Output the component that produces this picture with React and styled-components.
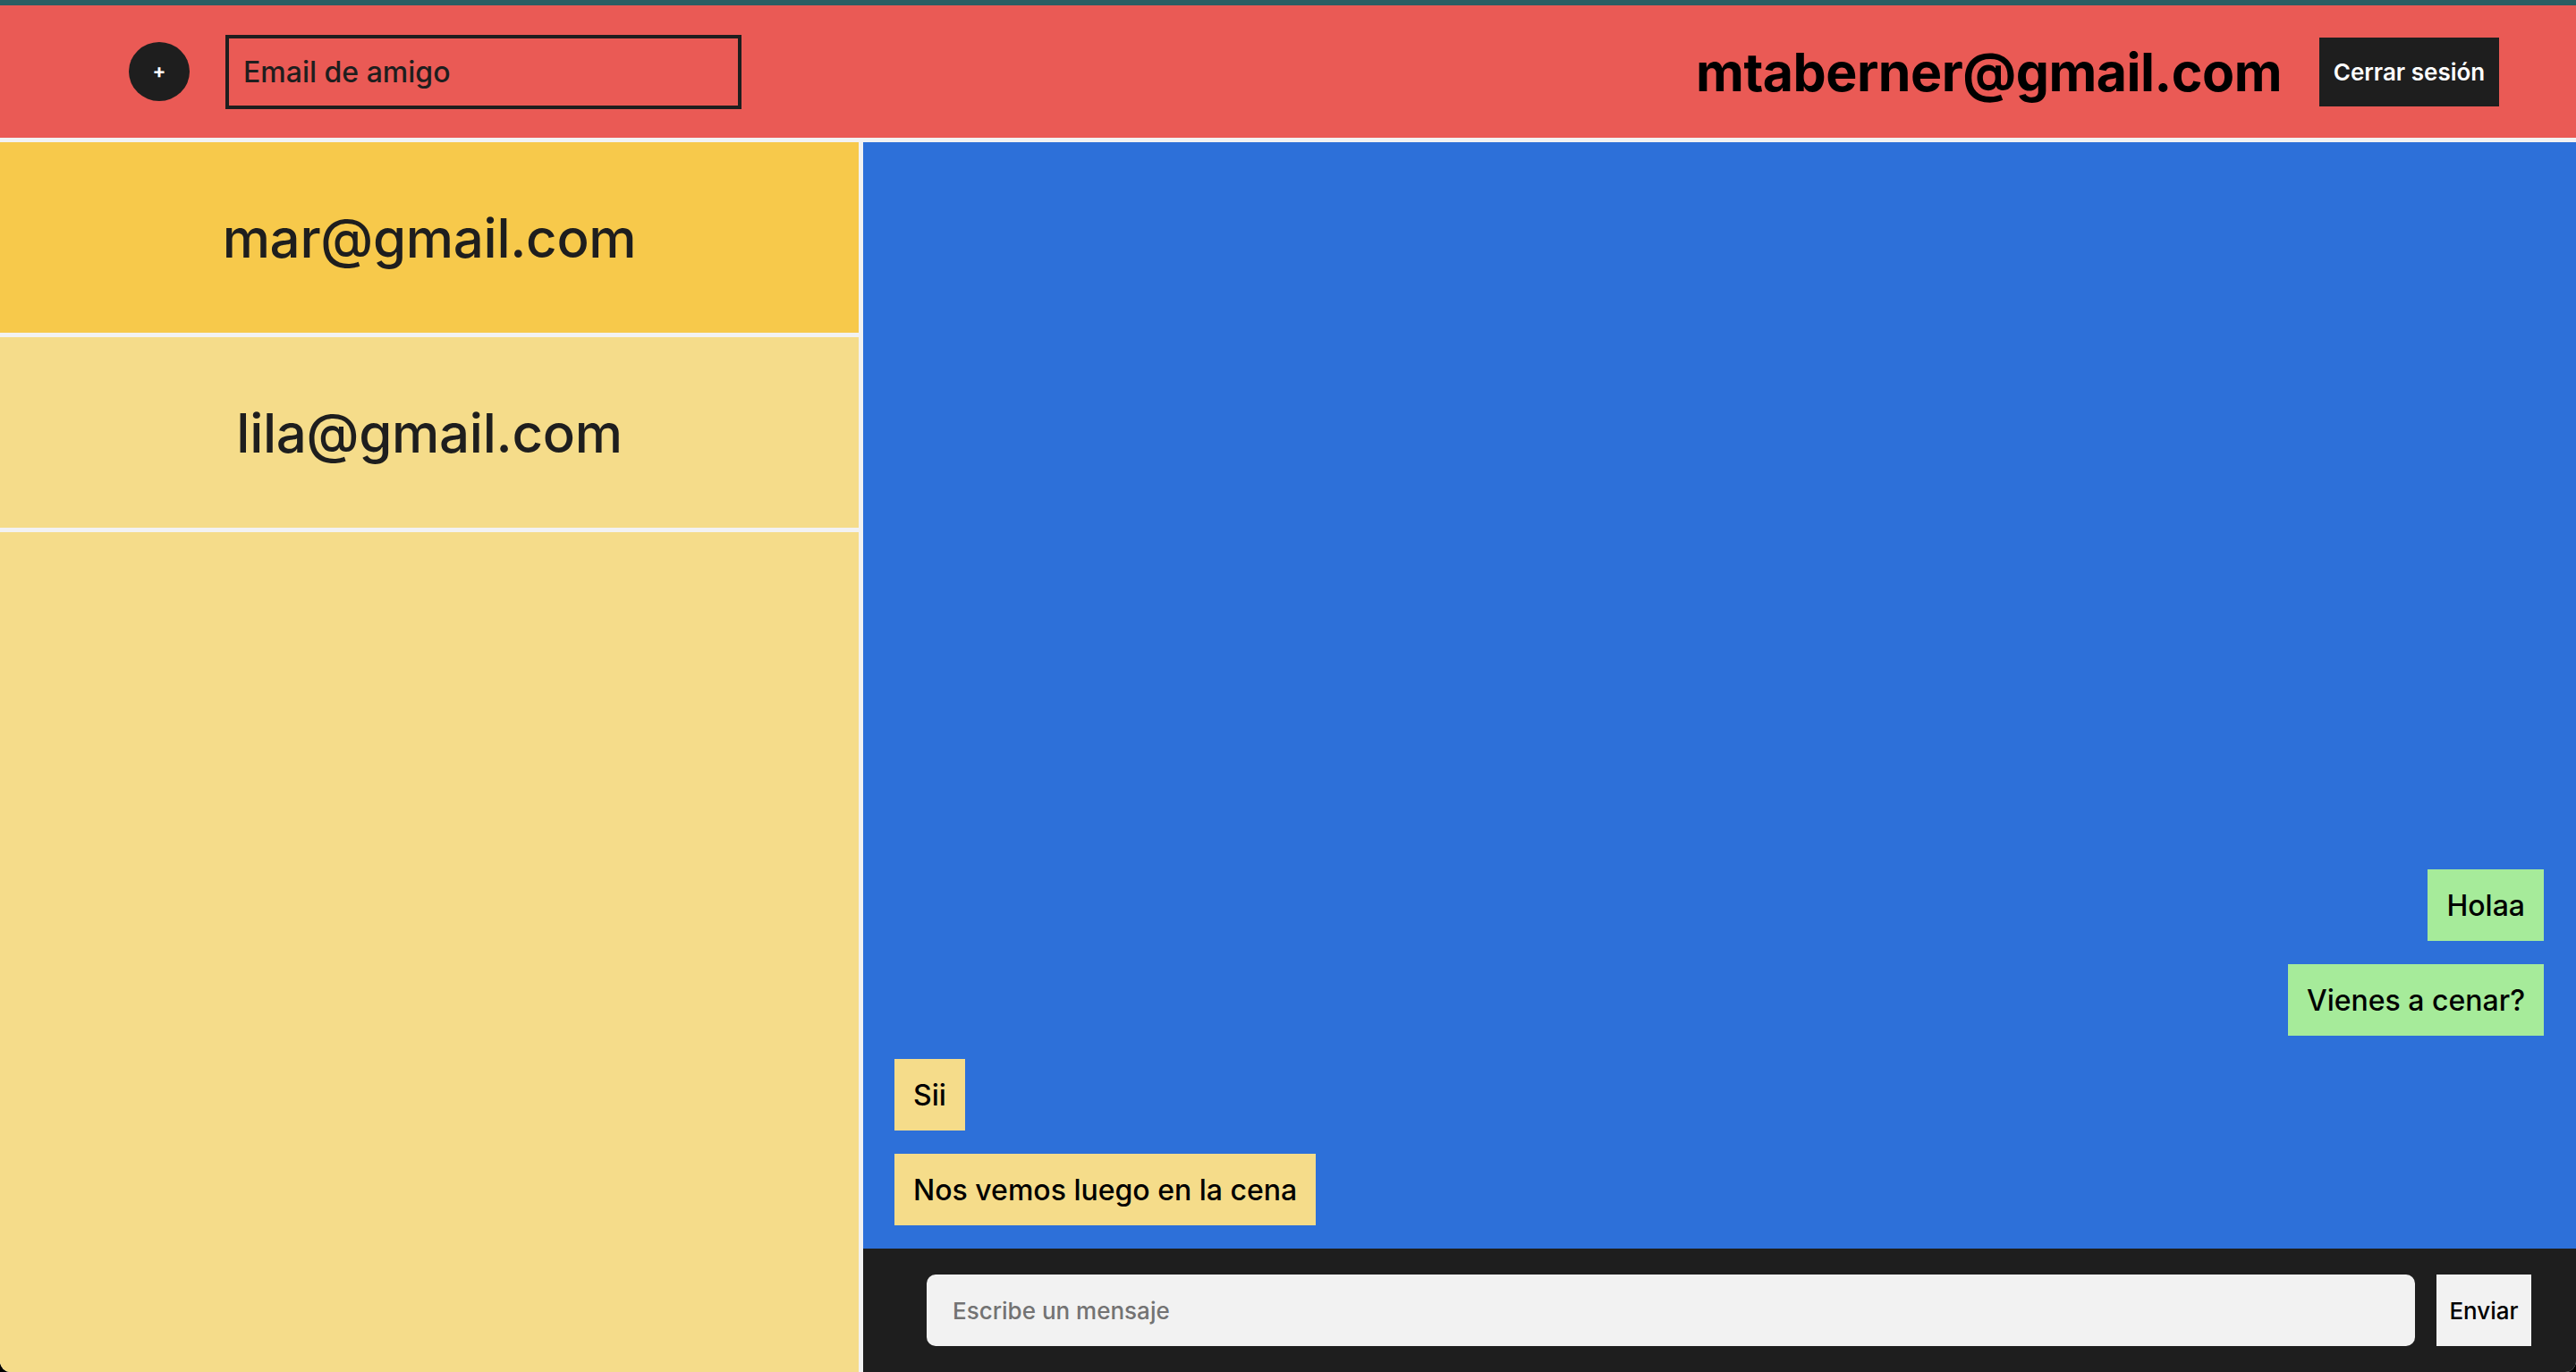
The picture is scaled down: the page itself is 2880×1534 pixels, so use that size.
import React from "react";
import styled, { createGlobalStyle } from "styled-components";

const GlobalStyle = createGlobalStyle`
  html, body {
    margin: 0;
    padding: 0;
    background: #000000;
  }
  * {
    box-sizing: border-box;
  }
`;

const friends = [
  { email: "mar@gmail.com", active: true },
  { email: "lila@gmail.com", active: false },
];

const messages = [
  { text: "Holaa", mine: true },
  { text: "Vienes a cenar?", mine: true },
  { text: "Sii", mine: false },
  { text: "Nos vemos luego en la cena", mine: false },
];

const App = () => {
  return (
    <>
      <GlobalStyle />
      <StyledApp>
        <Header>
          <div className="left">
            <AddButton>+</AddButton>
            <FriendInput placeholder="Email de amigo" />
          </div>
          <div className="right">
            <span className="current-user">mtaberner@gmail.com</span>
            <LogoutButton>Cerrar sesión</LogoutButton>
          </div>
        </Header>

        <Body>
          <Sidebar>
            {friends.map((friend) => (
              <FriendItem key={friend.email} active={friend.active}>
                {friend.email}
              </FriendItem>
            ))}
            <div className="filler" />
          </Sidebar>

          <ChatPanel>
            <MessageList>
              {messages.map((message, i) => (
                <Bubble key={i} mine={message.mine}>
                  {message.text}
                </Bubble>
              ))}
            </MessageList>
            <Composer>
              <MessageInput placeholder="Escribe un mensaje" />
              <SendButton>Enviar</SendButton>
            </Composer>
          </ChatPanel>
        </Body>
      </StyledApp>
    </>
  );
};

const StyledApp = styled.div`
  height: 100vh;
  display: flex;
  flex-direction: column;
  gap: 5px;
  background-color: #f2f2f2;
  border-top: 6px solid #2b5e63;
  border-radius: 0 0 12px 12px;
  overflow: hidden;
  font-family: Inter, "Noto Sans", sans-serif;
  color: #1e1e1e;
`;

const Header = styled.header`
  flex: 0 0 148px;
  display: flex;
  align-items: center;
  justify-content: space-between;
  padding: 0 86px 0 144px;
  background-color: #ea5a55;

  .left {
    display: flex;
    align-items: center;
    gap: 40px;
  }

  .right {
    display: flex;
    align-items: center;
    gap: 42px;
  }

  .current-user {
    font-size: 59px;
    font-weight: 700;
    color: #000000;
    letter-spacing: -0.5px;
  }
`;

const AddButton = styled.button`
  width: 68px;
  height: 66px;
  border-radius: 50%;
  border: none;
  background-color: #1e1e1e;
  color: #ffffff;
  font-family: inherit;
  font-size: 22px;
  font-weight: 700;
  padding: 0 0 3px;
  display: flex;
  align-items: center;
  justify-content: center;
`;

const FriendInput = styled.input`
  width: 577px;
  height: 83px;
  border: 4px solid #1e1e1e;
  background: transparent;
  padding: 0 16px;
  font-family: inherit;
  font-size: 32px;
  font-weight: 500;
  color: #1e1e1e;
  outline: none;

  &::placeholder {
    color: #1e1e1e;
  }
`;

const LogoutButton = styled.button`
  width: 201px;
  height: 77px;
  border: none;
  background-color: #1e1e1e;
  color: #ffffff;
  font-family: inherit;
  font-size: 26px;
  font-weight: 600;
  padding: 0;
`;

const Body = styled.main`
  flex: 1;
  min-height: 0;
  display: flex;
  gap: 5px;
`;

const Sidebar = styled.aside`
  flex: 0 0 960px;
  display: flex;
  flex-direction: column;
  gap: 5px;

  .filler {
    flex: 1;
    background-color: #f5dc8a;
  }
`;

const FriendItem = styled.div`
  height: 213px;
  display: flex;
  align-items: center;
  justify-content: center;
  background-color: ${(props) => (props.active ? "#f7c94b" : "#f5dc8a")};
  font-size: 60px;
  font-weight: 500;
  color: #1e1e1e;
  letter-spacing: -0.3px;
`;

const ChatPanel = styled.section`
  flex: 1;
  display: flex;
  flex-direction: column;
`;

const MessageList = styled.div`
  flex: 1;
  display: flex;
  flex-direction: column;
  justify-content: flex-end;
  gap: 26px;
  padding: 0 36px 26px 35px;
  background-color: #2d70d9;
`;

const Bubble = styled.div`
  align-self: ${(props) => (props.mine ? "flex-end" : "flex-start")};
  background-color: ${(props) => (props.mine ? "#a6eb9a" : "#f5dc8a")};
  height: 80px;
  display: flex;
  align-items: center;
  padding: 0 21px;
  font-size: 32px;
  font-weight: 500;
  color: #000000;
`;

const Composer = styled.div`
  flex: 0 0 138px;
  display: flex;
  align-items: center;
  gap: 24px;
  padding: 0 50px 0 71px;
  background-color: #1e1e1e;
`;

const MessageInput = styled.input`
  flex: 1;
  height: 80px;
  border: none;
  border-radius: 10px;
  background-color: #f2f2f2;
  padding: 0 29px;
  font-family: inherit;
  font-size: 26px;
  font-weight: 500;
  color: #1e1e1e;
  outline: none;

  &::placeholder {
    color: #737373;
  }
`;

const SendButton = styled.button`
  width: 106px;
  height: 80px;
  border: none;
  background-color: #f2f2f2;
  color: #000000;
  font-family: inherit;
  font-size: 26px;
  font-weight: 500;
  padding: 0;
`;

export default App;
